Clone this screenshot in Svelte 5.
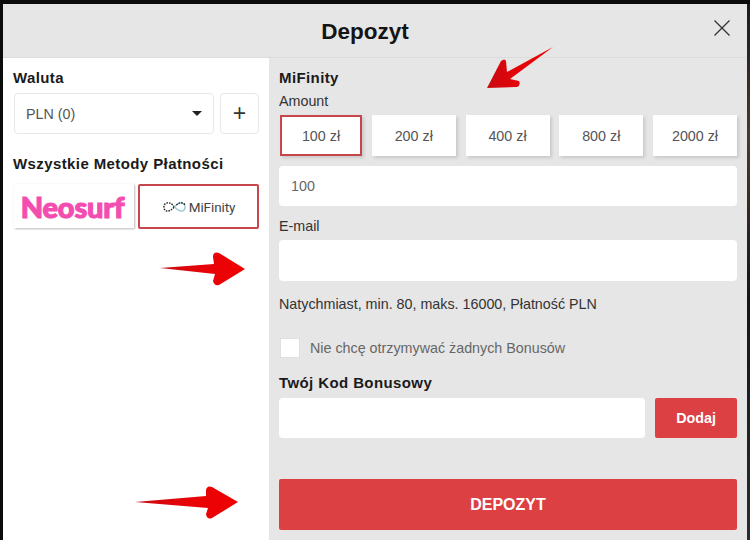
<script>
  const amounts = ['100 zł', '200 zł', '400 zł', '800 zł', '2000 zł'];
</script>

<div class="page">
  <div class="modal">
    <header class="head">
      <h1>Depozyt</h1>
      <svg class="close" viewBox="0 0 16 16" width="16" height="16" aria-hidden="true"><path d="M.5.5l15 15M15.500.5l-15 15" stroke="#333" stroke-width="1.300" fill="none"/></svg>
    </header>
    <div class="cols">
      <aside class="left">
        <div class="title t1">Waluta</div>
        <div class="currency">
          <div class="select"><span>PLN (0)</span><i class="caret"></i></div>
          <div class="plus">+</div>
        </div>
        <div class="title t2">Wszystkie Metody Płatności</div>
        <div class="methods">
          <div class="neo">Neosurf</div>
          <div class="mifi">
            <svg viewBox="0 0 26 12" width="25" height="12" aria-hidden="true">
              <path d="M13 6C10 2 7 1 4.500 2 1.500 3 1 8 4 10c3 1 6-1 9-4" fill="none" stroke="#222" stroke-width="1.500" stroke-dasharray="1.600 1.200"/>
              <path d="M13 6c3-4 6-5 8.500-4 3 1 3.500 6 .5 8-3 1-6-1-9-4" fill="none" stroke="#8cc5d2" stroke-width="1.300"/>
              <path d="M15 4c2-2 4-3 6.500-2 1 .3 2 1 2.500 2" fill="none" stroke="#222" stroke-width="1.400" stroke-dasharray="1.600 1.200"/>
            </svg>
            <span>MiFinity</span>
          </div>
        </div>
      </aside>
      <main class="right">
        <div class="title name">MiFinity</div>
        <div class="label amount">Amount</div>
        <div class="amounts">
          {#each amounts as a, i}
            <div class="amt" class:active={i === 0}>{a}</div>
          {/each}
        </div>
        <div class="input val">100</div>
        <div class="label email">E-mail</div>
        <div class="input"></div>
        <p class="note">Natychmiast, min. 80, maks. 16000, Płatność PLN</p>
        <div class="check"><span class="box"></span><span>Nie chcę otrzymywać żadnych Bonusów</span></div>
        <div class="title code">Twój Kod Bonusowy</div>
        <div class="bonus">
          <div class="input grow short"></div>
          <div class="add">Dodaj</div>
        </div>
        <div class="submit">DEPOZYT</div>
      </main>
    </div>
  </div>
  <div class="strip"></div>

  <svg class="arrows" viewBox="0 0 750 540" width="750" height="540" aria-hidden="true">
    <defs>
      <linearGradient id="r" x1="0" x2="1" y1="0" y2="0">
        <stop offset="0" stop-color="#c80a10"/><stop offset=".5" stop-color="#e60408"/><stop offset="1" stop-color="#f00000"/>
      </linearGradient>
    </defs>
    <path fill="url(#r)" d="M553 47 507 72 506 61Q505 58 501 61L487 88 517 87Q521 85 519 81L510 79Z"/>
    <path fill="url(#r)" d="M160 268 214 264 213 257Q213 251 219 253L245 269 219 285Q214 286 213 281L215 274Z"/>
    <path fill="url(#r)" d="M135 502 206 496 206 490Q207 485 212 487L238 502 212 518Q207 520 206 514L208 508Z"/>
  </svg>
</div>

<style>
  :global(body) { margin: 0; background: #000; }
  .page {
    position: relative;
    width: 750px;
    height: 540px;
    overflow: hidden;
    background: #0b0b0b;
    padding: 4px 0 0 3px;
    box-sizing: border-box;
    display: flex;
    font-family: "Liberation Sans", Arial, sans-serif;
    color: #111;
  }
  .modal { width: 744px; height: 536px; background: #e6e6e6; flex: none; }
  .strip { flex: 1; background: linear-gradient(#1b1b1b, #4a3a32 25%, #161616 55%, #2c2c2c); }
  .head {
    position: relative;
    height: 54px;
    display: flex;
    align-items: center;
    justify-content: center;
    border-bottom: 1px solid #dcdcdc;
    box-sizing: border-box;
    padding: 2px 20px 0 0;
  }
  h1 { margin: 0; font-size: 22.500px; font-weight: 700; color: #141414; }
  .close { position: absolute; top: 16px; right: 17px; }
  .cols { display: flex; height: 482px; }
  .left { width: 266px; background: #fff; padding: 0 10px 0 11px; box-sizing: border-box; flex: none; }
  .right { flex: 1; padding: 0 10px; box-sizing: border-box; }
  .title { font-size: 15px; letter-spacing: .4px; font-weight: 700; line-height: 18px; color: #1a1a1a; }
  .left .title { margin-left: -1px; }
  .t1 { margin-top: 11px; }
  .currency { display: flex; gap: 6px; margin-top: 6px; }
  .select {
    width: 200px; height: 41px; box-sizing: border-box;
    border: 1px solid #e8e8e8; border-radius: 4px;
    display: flex; align-items: center; justify-content: space-between;
    padding: 0 11px; font-size: 14.300px; color: #555;
  }
  .caret { width: 0; height: 0; border: 5px solid transparent; border-top: 5px solid #222; border-bottom: 0; }
  .plus {
    width: 39px; height: 41px; box-sizing: border-box;
    border: 1px solid #e8e8e8; border-radius: 4px;
    display: flex; align-items: center; justify-content: center;
    font-size: 23px; color: #333;
  }
  .t2 { margin-top: 21px; }
  .methods { display: flex; gap: 4px; margin-top: 11px; }
  .neo {
    width: 120px; height: 44px; box-sizing: border-box;
    box-shadow: 1px 1px 2px #bbb;
    display: flex; align-items: center; justify-content: center;
    padding-right: 3px;
    font-family: Lato, sans-serif; font-weight: 900; font-size: 29px;
    color: #f44db0; letter-spacing: -.2px;
    -webkit-text-stroke: 1.100px #f44db0;
  }
  .mifi {
    width: 121px; height: 45px; box-sizing: border-box;
    border: 2px solid #c5474c; border-radius: 2px;
    display: flex; align-items: center; justify-content: center; gap: 2px;
    font-family: Roboto, sans-serif; font-size: 13.500px; letter-spacing: -.1px; color: #444;
  }
  .name { margin-top: 11px; }
  .label { font-size: 14.300px; line-height: 16px; color: #333; }
  .amount { margin-top: 6px; }
  .amounts { display: flex; justify-content: space-between; margin-top: 6px; }
  .amt {
    width: 84px; height: 41px; box-sizing: border-box;
    background: #fff;
    box-shadow: 2px 2px 3px #c8c8c8;
    display: flex; align-items: center; justify-content: center;
    font-size: 14.300px; color: #555;
  }
  .active { width: 82px; margin-left: 1px; border: 2px solid #c5474c; }
  .input {
    height: 41px; background: #fff; border-radius: 4px;
    box-sizing: border-box; padding: 0 12px;
    display: flex; align-items: center;
    font-size: 14.300px; color: #666;
  }
  .val { margin-top: 10px; height: 40px; }
  .short { height: 40px; }
  .email { margin-top: 12px; margin-bottom: 6px; }
  .note { margin: 15px 0 0 0; font-size: 14.300px; line-height: 16px; color: #333; }
  .check { display: flex; align-items: center; gap: 10px; margin: 26px 0 0 1px; font-size: 14.300px; color: #666; }
  .box { width: 20px; height: 20px; background: #fff; border: 1px solid #e0e0e0; box-sizing: border-box; }
  .code { margin-top: 16px; }
  .bonus { display: flex; gap: 10px; margin-top: 6px; align-items: flex-start; }
  .grow { flex: 1; }
  .add {
    width: 82px; height: 40px; background: #dc4042; border-radius: 2px;
    display: flex; align-items: center; justify-content: center;
    color: #fff; font-size: 14.300px; font-weight: 700;
  }
  .submit {
    margin-top: 41px; height: 51px; background: #dc4042; border-radius: 2px;
    display: flex; align-items: center; justify-content: center;
    color: #fff; font-size: 16px; font-weight: 700;
  }
  .arrows { position: absolute; left: 0; top: 0; pointer-events: none; }
</style>
